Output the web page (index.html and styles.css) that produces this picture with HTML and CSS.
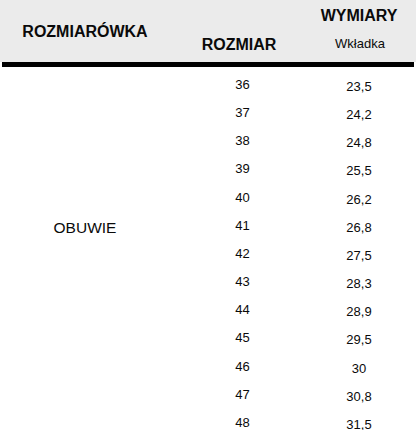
FILE: index.html
```
<!DOCTYPE html>
<html lang="pl">
<head>
<meta charset="utf-8">
<link rel="stylesheet" href="styles.css">
</head>
<body>
<div class="table">
  <div class="head">
    <div class="h-title">ROZMIARÓWKA</div>
    <div class="h-group">WYMIARY</div>
    <div class="h-size">ROZMIAR</div>
    <div class="h-sub">Wkładka</div>
  </div>
  <div class="rule"></div>
  <div class="body">
    <div class="cat">OBUWIE</div>
    <div class="rows">
      <div class="row"><span class="size">36</span><span class="val">23,5</span></div>
      <div class="row"><span class="size">37</span><span class="val">24,2</span></div>
      <div class="row"><span class="size">38</span><span class="val">24,8</span></div>
      <div class="row"><span class="size">39</span><span class="val">25,5</span></div>
      <div class="row"><span class="size">40</span><span class="val">26,2</span></div>
      <div class="row"><span class="size">41</span><span class="val">26,8</span></div>
      <div class="row"><span class="size">42</span><span class="val">27,5</span></div>
      <div class="row"><span class="size">43</span><span class="val">28,3</span></div>
      <div class="row"><span class="size">44</span><span class="val">28,9</span></div>
      <div class="row"><span class="size">45</span><span class="val">29,5</span></div>
      <div class="row"><span class="size">46</span><span class="val">30</span></div>
      <div class="row"><span class="size">47</span><span class="val">30,8</span></div>
      <div class="row"><span class="size">48</span><span class="val">31,5</span></div>
    </div>
  </div>
</div>
</body>
</html>
```
FILE: styles.css
```
html, body {
  margin: 0;
  padding: 0;
  background: #ffffff;
}
body {
  font-family: "Liberation Sans", Arial, sans-serif;
  color: #0a0a0a;
  overflow: hidden;
}
.table {
  width: 416px;
}
.head {
  background: #ebebeb;
  height: 62px;
  box-sizing: border-box;
  padding: 6px 0 8px;
  display: grid;
  grid-template-columns: 170px 142px 94px;
  grid-template-rows: 20px 20px;
  row-gap: 8px;
}
.h-title {
  grid-column: 1;
  grid-row: 1 / 3;
  align-self: center;
  padding-top: 4px;
  text-align: center;
  font-weight: bold;
  font-size: 16px;
  line-height: 20px;
}
.h-group {
  grid-column: 3;
  grid-row: 1;
  text-align: center;
  font-weight: bold;
  font-size: 16px;
  line-height: 20px;
}
.h-size {
  grid-column: 2;
  grid-row: 2;
  text-align: center;
  padding-right: 4px;
  padding-top: 1px;
  font-weight: bold;
  font-size: 16px;
  line-height: 20px;
}
.h-sub {
  grid-column: 3;
  grid-row: 2;
  text-align: center;
  font-size: 13px;
  line-height: 20px;
  padding-left: 2px;
}
.rule {
  height: 5px;
  background: #000000;
  margin: 0 2px;
}
.body {
  display: grid;
  grid-template-columns: 170px 236px;
  padding-top: 4px;
}
.cat {
  font-size: 15.5px;
  line-height: 18px;
  padding-top: 148px;
  text-align: center;
}
.rows {
  display: flex;
  flex-direction: column;
}
.row {
  display: grid;
  grid-template-columns: 142px 94px;
  height: 28.17px;
  font-size: 13px;
  line-height: 28px;
}
.size {
  text-align: center;
  padding-left: 3px;
}
.val {
  text-align: center;
  padding-top: 2px;
}
```
